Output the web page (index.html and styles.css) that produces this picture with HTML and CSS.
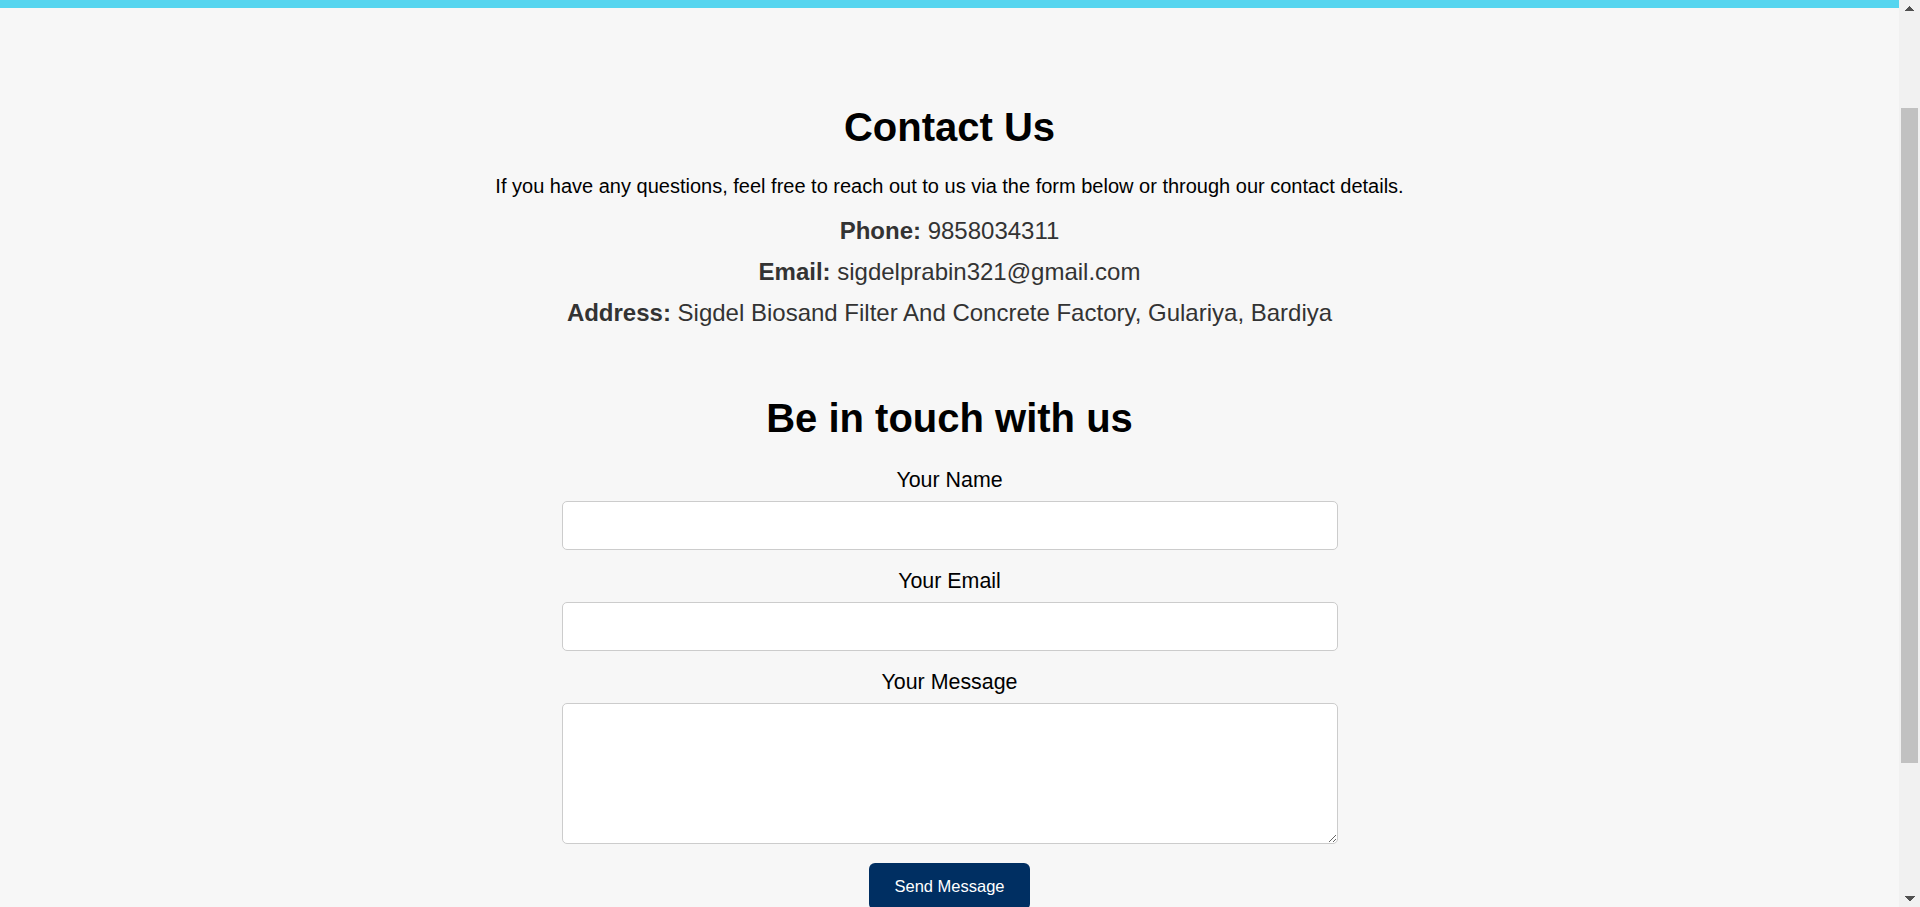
FILE: index.html
```html
<!DOCTYPE html>
<html lang="en">
<head>
<meta charset="utf-8">
<title>Contact Us</title>
<link rel="stylesheet" href="styles.css">
</head>
<body>
<header class="topbar"></header>
<main class="contact">
  <section class="details">
    <h1 class="title">Contact Us</h1>
    <p class="intro">If you have any questions, feel free to reach out to us via the form below or through our contact details.</p>
    <p class="info"><strong>Phone:</strong> 9858034311</p>
    <p class="info"><strong>Email:</strong> sigdelprabin321@gmail.com</p>
    <p class="info"><strong>Address:</strong> Sigdel Biosand Filter And Concrete Factory, Gulariya, Bardiya</p>
  </section>
  <section class="touch">
    <h2 class="title title-form">Be in touch with us</h2>
    <form class="form" onsubmit="return false;">
      <label class="label" for="name">Your Name</label>
      <input class="field" id="name" type="text">
      <label class="label" for="email">Your Email</label>
      <input class="field" id="email" type="email">
      <label class="label" for="message">Your Message</label>
      <textarea class="field area" id="message"></textarea>
      <button class="send" type="submit">Send Message</button>
    </form>
  </section>
</main>
<div class="scrollbar" aria-hidden="true">
  <span class="sb-btn sb-up"></span>
  <span class="sb-track"><span class="sb-thumb"></span></span>
  <span class="sb-btn sb-down"></span>
</div>
<script src="script.js"></script>
</body>
</html>
```

FILE: styles.css
```css
html {
  background: #f7f7f7;
  scrollbar-width: none;
}
html::-webkit-scrollbar {
  display: none;
}
body {
  margin: 0 21px 0 0;
  background: #f7f7f7;
  font-family: "Liberation Sans", Arial, sans-serif;
  color: #000;
}
.topbar {
  height: 134px;
  background: #56d5ef;
}
.contact {
  display: flex;
  flex-direction: column;
  align-items: center;
  padding: 96px 0 174px;
  text-align: center;
}
.details {
  display: flex;
  flex-direction: column;
  align-items: center;
}
.title {
  margin: 0;
  font-size: 40px;
  line-height: 46px;
  font-weight: bold;
  color: #000;
}
.intro {
  margin: 25px 0 0;
  font-size: 20px;
  line-height: 23px;
}
.info {
  margin: 13px 0 0;
  font-size: 24px;
  line-height: 28px;
  color: #333;
}
.intro + .info {
  margin-top: 19px;
}
.touch {
  display: flex;
  flex-direction: column;
  align-items: center;
  margin-top: 68px;
}
.form {
  display: flex;
  flex-direction: column;
  align-items: center;
  width: 776px;
  margin-top: 27px;
}
.label {
  display: block;
  font-size: 21.4px;
  line-height: 25px;
  margin-bottom: 8px;
}
.field {
  display: block;
  box-sizing: border-box;
  width: 100%;
  height: 49px;
  margin: 0 0 19px;
  padding: 12px;
  border: 1px solid #ccc;
  border-radius: 5px;
  background: #fff;
  font-family: "Liberation Sans", Arial, sans-serif;
  font-size: 16px;
}
.area {
  height: 141px;
}
.send {
  margin: 0;
  padding: 14px 25px;
  border: 0;
  border-radius: 6px;
  background: #002f62;
  color: #fff;
  font-family: "Liberation Sans", Arial, sans-serif;
  font-size: 16.5px;
  line-height: 19px;
  cursor: pointer;
}

/* browser scrollbar as seen in the capture */
.scrollbar {
  position: fixed;
  top: 0;
  right: 0;
  width: 21px;
  height: 100vh;
  display: flex;
  flex-direction: column;
  background: #f1f1f1;
}
.sb-btn {
  display: block;
  height: 17px;
  flex: none;
  background-repeat: no-repeat;
  background-size: 5px 5px, 5px 5px;
  background-position: 5.5px 6px, 10.5px 6px;
}
.sb-up {
  background-image:
    linear-gradient(to top left, #505050 50%, transparent 50%),
    linear-gradient(to top right, #505050 50%, transparent 50%);
}
.sb-down {
  background-image:
    linear-gradient(to bottom left, #505050 50%, transparent 50%),
    linear-gradient(to bottom right, #505050 50%, transparent 50%);
}
.sb-track {
  display: block;
  flex: 1;
  padding: 91px 2px 0;
}
.sb-thumb {
  display: block;
  height: 655px;
  background: #c1c1c1;
}
```

FILE: script.js
```js
if ('scrollRestoration' in history) { history.scrollRestoration = 'manual'; }
window.scrollTo(0, 126);
window.addEventListener('load', function () { window.scrollTo(0, 126); });
```
